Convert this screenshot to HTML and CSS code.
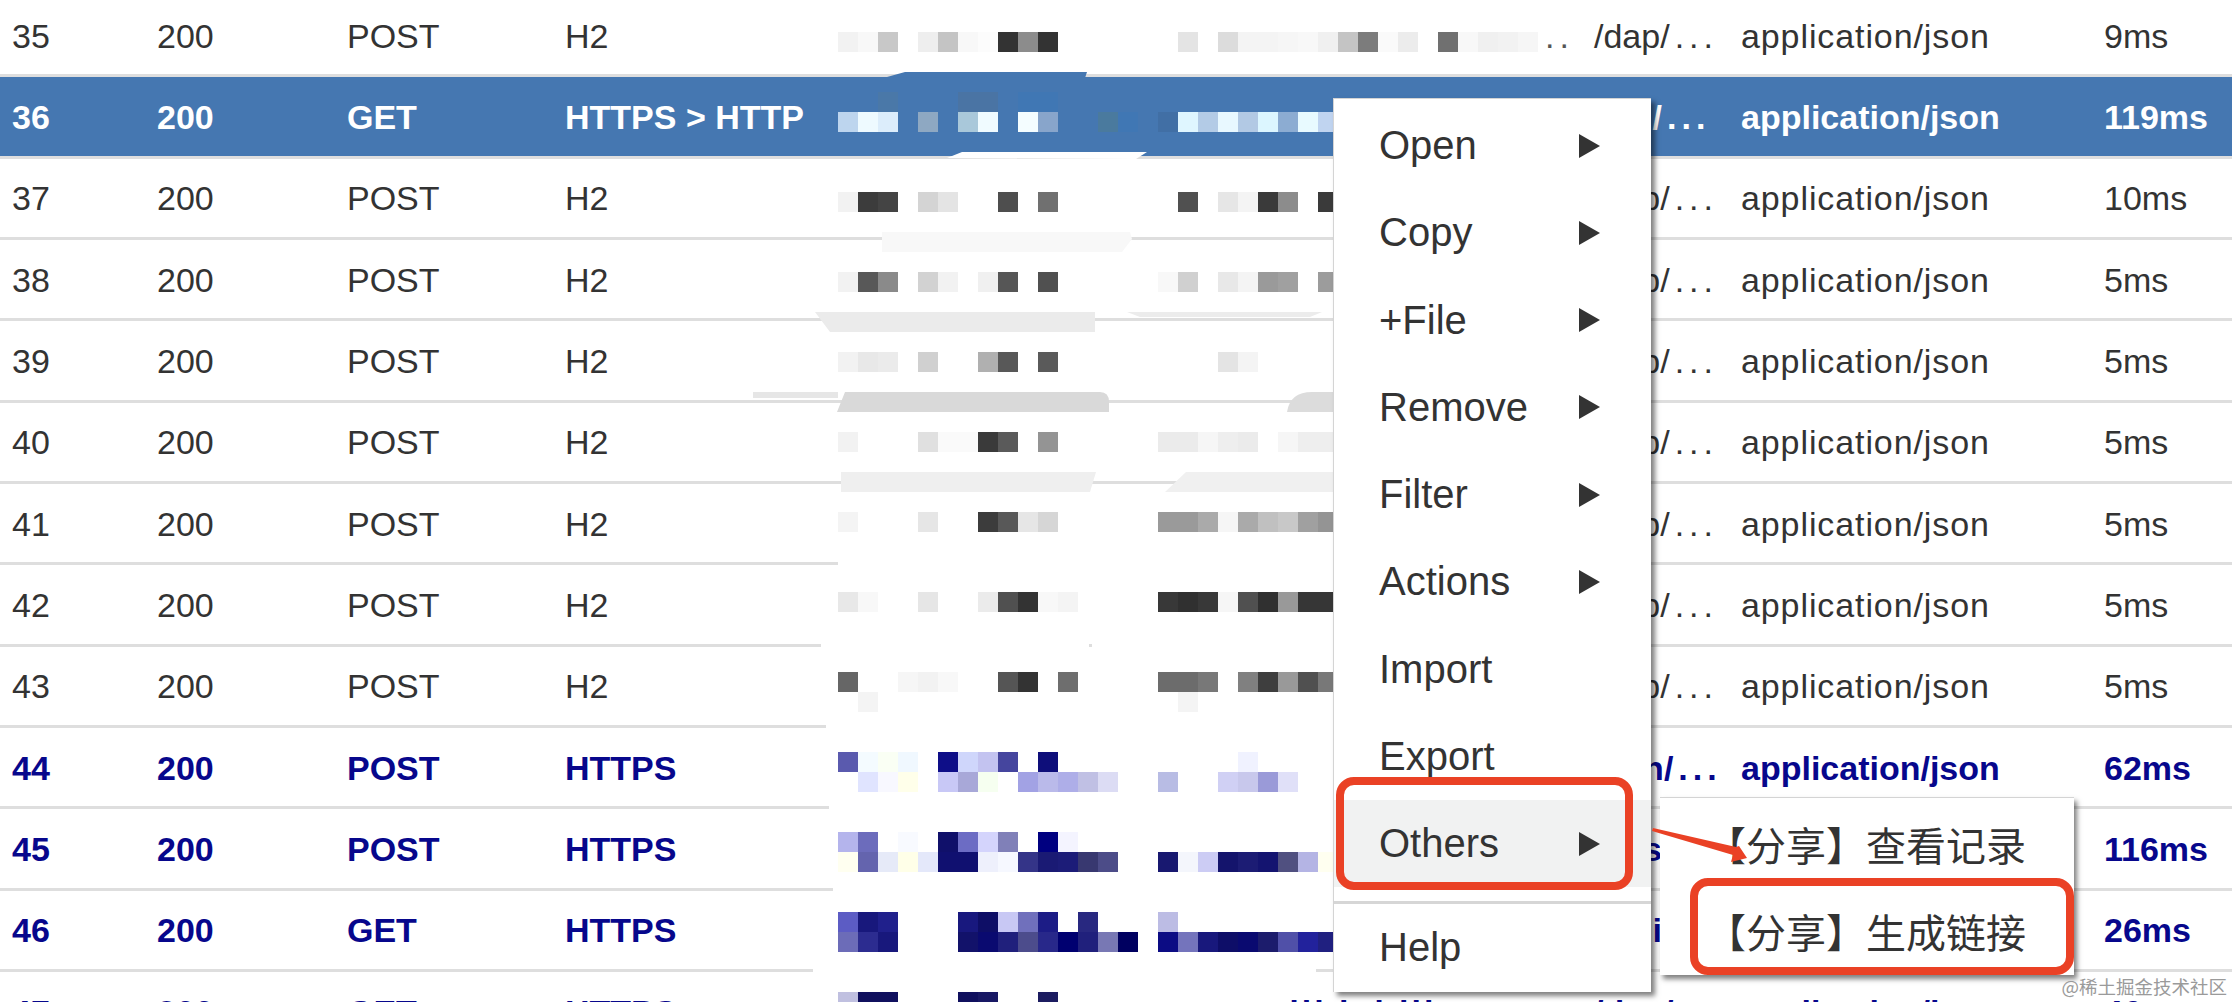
FILE: index.html
```html
<!DOCTYPE html>
<html lang="zh-CN">
<head>
<meta charset="utf-8">
<title>Sessions</title>
<link rel="stylesheet" href="styles.css">
</head>
<body>
<div class="page">
  <div class="sessions">
    <div class="row"><span>35</span><span>200</span><span>POST</span><span>H2</span><span class="host">..</span><span>/dap<i class="dots">/...</i></span><span class="mime">application/json</span><span>9ms</span></div>
    <div class="row selected"><span>36</span><span>200</span><span>GET</span><span>HTTPS &gt; HTTP</span><span class="host"></span><span>/dai<i class="dots">/...</i></span><span class="mime">application/json</span><span>119ms</span></div>
    <div class="row"><span>37</span><span>200</span><span>POST</span><span>H2</span><span class="host"></span><span>/dap<i class="dots">/...</i></span><span class="mime">application/json</span><span>10ms</span></div>
    <div class="row"><span>38</span><span>200</span><span>POST</span><span>H2</span><span class="host"></span><span>/dap<i class="dots">/...</i></span><span class="mime">application/json</span><span>5ms</span></div>
    <div class="row"><span>39</span><span>200</span><span>POST</span><span>H2</span><span class="host"></span><span>/dap<i class="dots">/...</i></span><span class="mime">application/json</span><span>5ms</span></div>
    <div class="row"><span>40</span><span>200</span><span>POST</span><span>H2</span><span class="host"></span><span>/dap<i class="dots">/...</i></span><span class="mime">application/json</span><span>5ms</span></div>
    <div class="row"><span>41</span><span>200</span><span>POST</span><span>H2</span><span class="host"></span><span>/dap<i class="dots">/...</i></span><span class="mime">application/json</span><span>5ms</span></div>
    <div class="row"><span>42</span><span>200</span><span>POST</span><span>H2</span><span class="host"></span><span>/dap<i class="dots">/...</i></span><span class="mime">application/json</span><span>5ms</span></div>
    <div class="row"><span>43</span><span>200</span><span>POST</span><span>H2</span><span class="host"></span><span>/dap<i class="dots">/...</i></span><span class="mime">application/json</span><span>5ms</span></div>
    <div class="row secure"><span>44</span><span>200</span><span>POST</span><span>HTTPS</span><span class="host"></span><span>/son<i class="dots">/...</i></span><span class="mime">application/json</span><span>62ms</span></div>
    <div class="row secure"><span>45</span><span>200</span><span>POST</span><span>HTTPS</span><span class="host"></span><span>/das</span><span class="mime">application/json</span><span>116ms</span></div>
    <div class="row secure"><span>46</span><span>200</span><span>GET</span><span>HTTPS</span><span class="host"></span><span>/dali</span><span class="mime">application/json</span><span>26ms</span></div>
    <div class="row secure"><span>47</span><span>200</span><span>GET</span><span>HTTPS</span><span class="host tail">dil bd lib</span><span>/dap<i class="dots">/...</i></span><span class="mime">application/json</span><span>46ms</span></div>
  </div>

  <svg class="mosaic" viewBox="0 0 2232 1002" aria-hidden="true">
    <!-- smears that hide the row lines -->
    <path fill="#4577b1" d="M887 77L905 72H1087L1085 78z"/>
    <path fill="#fff" d="M947 158L962 152H1147L1136 159z"/>
    <path fill="#f8f8f8" d="M882 232H1130L1132 239L1122 252H882z"/>
    <path fill="#ebebeb" d="M815 312H1095V332H830z"/>
    <path fill="#ececec" d="M1127 312H1322L1310 317H1140z"/>
    <path fill="#e6e6e6" d="M753 392H838V398H753z"/>
    <path fill="#d9d9d9" d="M845 392H1100Q1109 392 1109 402V412H837z"/>
    <path fill="#dcdcdc" d="M1287 412Q1290 392 1312 392H1333V412z"/>
    <path fill="#efefef" d="M841 472H1096L1090 492H841z"/>
    <path fill="#f0f0f0" d="M1186 472H1333V492H1165z"/>
    <rect class="cover" x="838" y="555" width="495" height="18"/>
    <rect class="cover" x="821" y="638" width="268" height="16"/>
    <rect class="cover" x="1092" y="638" width="241" height="16"/>
    <rect class="cover" x="826" y="720" width="507" height="16"/>
    <rect class="cover" x="829" y="800" width="504" height="18"/>
    <rect class="cover" x="833" y="882" width="500" height="16"/>
    <rect class="cover" x="813" y="964" width="503" height="14"/>

    <g transform="translate(838 32)">
      <rect x="0" fill="#f2f2f2"/><rect x="20" fill="#f8f8f8"/><rect x="40" fill="#c8c8c8"/><rect x="80" fill="#eee"/><rect x="100" fill="#c4c4c4"/><rect x="120" fill="#f8f8f8"/><rect x="140" fill="#fcfcfc"/><rect x="160" fill="#333"/><rect x="180" fill="#8c8c8c"/><rect x="200" fill="#333"/>
      <rect x="340" fill="#e4e4e4"/><rect x="380" fill="#dcdcdc"/><rect x="400" fill="#f4f4f4"/><rect x="420" fill="#f4f4f4"/><rect x="440" fill="#f6f6f6"/><rect x="460" fill="#f8f8f8"/><rect x="480" fill="#f0f0f0"/><rect x="500" fill="#c4c4c4"/><rect x="520" fill="#7c7c7c"/><rect x="540" fill="#fafafa"/><rect x="560" fill="#ececec"/><rect x="600" fill="#707070"/><rect x="620" fill="#f8f8f8"/><rect x="640" fill="#f0f0f0"/><rect x="660" fill="#f2f2f2"/><rect x="680" fill="#f6f6f6"/>
    </g>
    <g transform="translate(838 112)">
      <rect x="40" y="-20" fill="#4a78a8"/><rect x="120" y="-20" fill="#4a74a4"/><rect x="140" y="-20" fill="#4a74a4"/><rect x="180" y="-20" fill="#4077b4"/><rect x="200" y="-20" fill="#4077b4"/>
      <rect x="0" fill="#bdd5ee"/><rect x="20" fill="#eefaff"/><rect x="40" fill="#dcedfb"/><rect x="80" fill="#8ea8c2"/><rect x="120" fill="#a9c8da"/><rect x="140" fill="#f0fbff"/><rect x="180" fill="#f4fdff"/><rect x="200" fill="#88a5cb"/>
      <rect x="260" fill="#4a7a9e"/><rect x="280" fill="#4077b4"/><rect x="320" fill="#416fa5"/>
      <rect x="340" fill="#dff6ff"/><rect x="360" fill="#b3cbe6"/><rect x="380" fill="#e8f8ff"/><rect x="400" fill="#b2c9e4"/><rect x="420" fill="#dcf6ff"/><rect x="440" fill="#8cacd2"/><rect x="460" fill="#e8faff"/><rect x="480" fill="#c0d4f0"/>
    </g>
    <g transform="translate(838 192)">
      <rect x="0" fill="#f2f2f2"/><rect x="20" fill="#3c3c3c"/><rect x="40" fill="#444"/><rect x="80" fill="#d4d4d4"/><rect x="100" fill="#e4e4e4"/><rect x="160" fill="#4e4e4e"/><rect x="200" fill="#707070"/>
      <rect x="340" fill="#505050"/><rect x="380" fill="#e6e6e6"/><rect x="400" fill="#f4f4f4"/><rect x="420" fill="#3a3a3a"/><rect x="440" fill="#8c8c8c"/><rect x="480" fill="#3a3a3a"/>
    </g>
    <g transform="translate(838 272)">
      <rect x="0" fill="#f2f2f2"/><rect x="20" fill="#585858"/><rect x="40" fill="#8a8a8a"/><rect x="80" fill="#d2d2d2"/><rect x="100" fill="#f2f2f2"/><rect x="140" fill="#f0f0f0"/><rect x="160" fill="#565656"/><rect x="200" fill="#505050"/>
      <rect x="320" fill="#f8f8f8"/><rect x="340" fill="#d0d0d0"/><rect x="380" fill="#e8e8e8"/><rect x="400" fill="#f4f4f4"/><rect x="420" fill="#9a9a9a"/><rect x="440" fill="#a0a0a0"/><rect x="480" fill="#9c9c9c"/>
    </g>
    <g transform="translate(838 352)">
      <rect x="0" fill="#f2f2f2"/><rect x="20" fill="#e8e8e8"/><rect x="40" fill="#ebebeb"/><rect x="80" fill="#d0d0d0"/><rect x="140" fill="#b0b0b0"/><rect x="160" fill="#585858"/><rect x="200" fill="#5a5a5a"/>
      <rect x="380" fill="#e4e4e4"/><rect x="400" fill="#f4f4f4"/>
    </g>
    <g transform="translate(838 432)">
      <rect x="0" fill="#f2f2f2"/><rect x="80" fill="#e0e0e0"/><rect x="100" fill="#fafafa"/><rect x="120" fill="#fafafa"/><rect x="140" fill="#3a3a3a"/><rect x="160" fill="#5a5a5a"/><rect x="200" fill="#949494"/>
      <rect x="320" fill="#ebebeb"/><rect x="340" fill="#ebebeb"/><rect x="360" fill="#f6f6f6"/><rect x="380" fill="#eee"/><rect x="400" fill="#ebebeb"/><rect x="440" fill="#f6f6f6"/><rect x="460" fill="#eee"/><rect x="480" fill="#eee"/>
    </g>
    <g transform="translate(838 512)">
      <rect x="0" fill="#f4f4f4"/><rect x="80" fill="#e6e6e6"/><rect x="140" fill="#3c3c3c"/><rect x="160" fill="#585858"/><rect x="180" fill="#e6e6e6"/><rect x="200" fill="#d6d6d6"/>
      <rect x="320" fill="#9a9a9a"/><rect x="340" fill="#9a9a9a"/><rect x="360" fill="#aaa"/><rect x="380" fill="#f6f6f6"/><rect x="400" fill="#aaa"/><rect x="420" fill="#c0c0c0"/><rect x="440" fill="#c8c8c8"/><rect x="460" fill="#a0a0a0"/><rect x="480" fill="#949494"/>
    </g>
    <g transform="translate(838 592)">
      <rect x="0" fill="#e8e8e8"/><rect x="20" fill="#f8f8f8"/><rect x="80" fill="#e6e6e6"/><rect x="140" fill="#ebebeb"/><rect x="160" fill="#505050"/><rect x="180" fill="#333"/><rect x="200" fill="#f8f8f8"/><rect x="220" fill="#f4f4f4"/>
      <rect x="320" fill="#383838"/><rect x="340" fill="#303030"/><rect x="360" fill="#383838"/><rect x="380" fill="#f6f6f6"/><rect x="400" fill="#505050"/><rect x="420" fill="#303030"/><rect x="440" fill="#999"/><rect x="460" fill="#363636"/><rect x="480" fill="#363636"/>
    </g>
    <g transform="translate(838 672)">
      <rect x="0" fill="#666"/><rect x="60" fill="#f6f6f6"/><rect x="80" fill="#f2f2f2"/><rect x="100" fill="#f8f8f8"/><rect x="160" fill="#555"/><rect x="180" fill="#333"/><rect x="220" fill="#6e6e6e"/><rect x="20" y="20" fill="#f4f4f4"/>
      <rect x="320" fill="#6c6c6c"/><rect x="340" fill="#6c6c6c"/><rect x="360" fill="#787878"/><rect x="400" fill="#808080"/><rect x="420" fill="#3e3e3e"/><rect x="440" fill="#999"/><rect x="460" fill="#505050"/><rect x="480" fill="#787878"/><rect x="340" y="20" fill="#f4f4f4"/>
    </g>
    <g transform="translate(838 752)">
      <rect x="0" fill="#5a5aae"/><rect x="20" fill="#f4fbff"/><rect x="40" fill="#fafff4"/><rect x="60" fill="#f0f8ff"/><rect x="100" fill="#0e0e88"/><rect x="120" fill="#cfd6fb"/><rect x="140" fill="#c3c3f0"/><rect x="160" fill="#45459e"/><rect x="200" fill="#0e0e7a"/><rect x="400" fill="#f0f2ff"/>
      <rect x="20" y="20" fill="#e0e4ff"/><rect x="40" y="20" fill="#f8f8ff"/><rect x="60" y="20" fill="#ffffea"/><rect x="100" y="20" fill="#c8c8f6"/><rect x="120" y="20" fill="#a8a8d8"/><rect x="140" y="20" fill="#f6fff0"/><rect x="180" y="20" fill="#a2a2e4"/><rect x="200" y="20" fill="#babaea"/><rect x="220" y="20" fill="#aeaee8"/><rect x="240" y="20" fill="#c0c0e4"/><rect x="260" y="20" fill="#dcdcf4"/>
      <rect x="320" y="20" fill="#b8bce4"/><rect x="380" y="20" fill="#d0d0f4"/><rect x="400" y="20" fill="#c8c8ec"/><rect x="420" y="20" fill="#9a9ad8"/><rect x="440" y="20" fill="#e0e0f8"/>
    </g>
    <g transform="translate(838 832)">
      <rect x="0" fill="#b4b4ec"/><rect x="20" fill="#6c6cbc"/><rect x="60" fill="#f8faff"/><rect x="100" fill="#10106a"/><rect x="120" fill="#6c6cc4"/><rect x="140" fill="#d4d4fc"/><rect x="160" fill="#8080b8"/><rect x="200" fill="#000080"/><rect x="220" fill="#f4f4ff"/>
      <rect x="0" y="20" fill="#fffff0"/><rect x="20" y="20" fill="#6464ae"/><rect x="40" y="20" fill="#e6eaf8"/><rect x="60" y="20" fill="#ffffe8"/><rect x="80" y="20" fill="#e4e8fa"/><rect x="100" y="20" fill="#101070"/><rect x="120" y="20" fill="#101070"/><rect x="140" y="20" fill="#eef0fc"/><rect x="160" y="20" fill="#f6f8ff"/><rect x="180" y="20" fill="#343488"/><rect x="200" y="20" fill="#1a1a74"/><rect x="220" y="20" fill="#1c1c78"/><rect x="240" y="20" fill="#383870"/><rect x="260" y="20" fill="#4c4c88"/>
      <rect x="320" y="20" fill="#181870"/><rect x="340" y="20" fill="#f4f6fc"/><rect x="360" y="20" fill="#ccccf4"/><rect x="380" y="20" fill="#14146c"/><rect x="400" y="20" fill="#1c1c74"/><rect x="420" y="20" fill="#141470"/><rect x="440" y="20" fill="#505080"/><rect x="460" y="20" fill="#b4b4e4"/><rect x="480" y="20" fill="#fffff0"/>
    </g>
    <g transform="translate(838 912)">
      <rect x="0" fill="#5c5cc4"/><rect x="20" fill="#18187c"/><rect x="40" fill="#20208c"/><rect x="120" fill="#18187e"/><rect x="140" fill="#0e0e66"/><rect x="160" fill="#c8c8f4"/><rect x="180" fill="#7070bc"/><rect x="200" fill="#1c1c86"/><rect x="240" fill="#282880"/><rect x="320" fill="#bcbce4"/>
      <rect x="0" y="20" fill="#6c6cb8"/><rect x="20" y="20" fill="#2c2c90"/><rect x="40" y="20" fill="#18187c"/><rect x="120" y="20" fill="#12126a"/><rect x="140" y="20" fill="#0a0a70"/><rect x="160" y="20" fill="#20207c"/><rect x="180" y="20" fill="#4c4c8c"/><rect x="200" y="20" fill="#28288a"/><rect x="220" y="20" fill="#000070"/><rect x="240" y="20" fill="#20207c"/><rect x="260" y="20" fill="#7878b4"/><rect x="280" y="20" fill="#000060"/>
      <rect x="320" y="20" fill="#0c0c84"/><rect x="340" y="20" fill="#7474bc"/><rect x="360" y="20" fill="#18187c"/><rect x="380" y="20" fill="#0e0e68"/><rect x="400" y="20" fill="#0a0a70"/><rect x="420" y="20" fill="#1c1c6c"/><rect x="440" y="20" fill="#5050a8"/><rect x="460" y="20" fill="#22229c"/><rect x="480" y="20" fill="#202080"/>
    </g>
    <g transform="translate(838 992)">
      <rect x="0" fill="#c0c0e0"/><rect x="20" fill="#10105e"/><rect x="40" fill="#10105e"/><rect x="120" fill="#10105e"/><rect x="140" fill="#181864"/><rect x="200" fill="#1c1c60"/>
    </g>
  </svg>

  <div class="menu">
    <div class="menu-item"><span>Open</span><i class="caret"></i></div>
    <div class="menu-item"><span>Copy</span><i class="caret"></i></div>
    <div class="menu-item"><span>+File</span><i class="caret"></i></div>
    <div class="menu-item"><span>Remove</span><i class="caret"></i></div>
    <div class="menu-item"><span>Filter</span><i class="caret"></i></div>
    <div class="menu-item"><span>Actions</span><i class="caret"></i></div>
    <div class="menu-item"><span>Import</span></div>
    <div class="menu-item"><span>Export</span></div>
    <div class="menu-item hovered"><span>Others</span><i class="caret"></i></div>
    <div class="menu-sep"></div>
    <div class="menu-item"><span>Help</span></div>
  </div>

  <div class="submenu">
    <div class="sub-item">【分享】查看记录</div>
    <div class="sub-item">【分享】生成链接</div>
  </div>

  <div class="mark mark-others"></div>
  <div class="mark mark-link"></div>
  <svg class="pointer" viewBox="0 0 100 40" aria-hidden="true">
    <path d="M1 0L84 19L87 18L95 30L79 34L81 27L0 3z"/>
  </svg>

  <div class="watermark">@稀土掘金技术社区</div>
</div>
</body>
</html>
```
FILE: styles.css
```css
* { box-sizing: border-box; }
html, body { margin: 0; padding: 0; background: #fff; }
.page {
  position: relative;
  width: 2232px;
  height: 1002px;
  overflow: hidden;
  font-family: "Liberation Sans", "Noto Sans CJK SC", sans-serif;
  font-size: 34px;
  color: #333;
}
.sessions { margin-top: -4px; }
.row {
  display: grid;
  grid-template-columns: 145px 190px 218px 273px 756px 147px 363px 1fr;
  align-items: center;
  height: 81.35px;
  padding: 2px 0 0 12px;
  border-bottom: 3px solid #dedede;
  white-space: nowrap;
}
.row.selected { background: #4577b1; color: #fff; font-weight: 700; }
.row.secure { color: #07078c; font-weight: 700; }
.mime { letter-spacing: .9px; }
.selected .mime, .secure .mime { letter-spacing: 0; }
.host { text-align: right; padding-right: 20px; letter-spacing: 5px; color: #555; }
.host.tail { text-align: left; padding: 0 0 0 440px; letter-spacing: 3px; color: #07078c; }
.dots { font-style: normal; letter-spacing: 5px; }

.mosaic { position: absolute; left: 0; top: 0; width: 2232px; height: 1002px; }
.mosaic g rect { width: 20px; height: 20px; }
.cover { fill: #fff; }

.menu {
  position: absolute;
  left: 1333px;
  top: 98px;
  width: 318px;
  height: 894px;
  padding-top: 3px;
  background: #fff;
  border-top: 1px solid #d4d4d4;
  border-left: 1px solid #d4d4d4;
  box-shadow: 4px 4px 5px rgba(0, 0, 0, .5);
  font-size: 40px;
}
.menu-item {
  display: flex;
  align-items: center;
  justify-content: space-between;
  height: 87.25px;
  padding: 0 51px 0 45px;
}
.menu-item.hovered { background: #f1f2f2; }
.menu-sep { height: 3px; margin-top: 14px; background: #d6d6d6; }
.caret {
  width: 0;
  height: 0;
  border-left: 21px solid #333;
  border-top: 12px solid transparent;
  border-bottom: 12px solid transparent;
}

.submenu {
  position: absolute;
  left: 1660px;
  top: 797px;
  width: 414px;
  height: 178px;
  padding-top: 2px;
  background: #fff;
  border-top: 1px solid #d4d4d4;
  box-shadow: 3px 4px 5px rgba(0, 0, 0, .5);
  font-size: 40px;
  font-family: "Noto Sans CJK SC", sans-serif;
}
.sub-item {
  display: flex;
  align-items: center;
  height: 87px;
  padding-left: 46px;
  white-space: nowrap;
}

.mark {
  position: absolute;
  border: 8px solid #ea4125;
  border-radius: 18px;
}
.mark-others { left: 1336px; top: 777px; width: 297px; height: 113px; }
.mark-link { left: 1690px; top: 878px; width: 384px; height: 97px; }

.pointer { position: absolute; left: 1652px; top: 828px; width: 100px; height: 40px; }
.pointer path { fill: #ea4125; }

.watermark {
  position: absolute;
  right: 5px;
  top: 974px;
  font-family: "Noto Sans CJK SC", sans-serif;
  font-size: 18.5px;
  line-height: 24px;
  color: #9a9a9a;
  white-space: nowrap;
}
```
